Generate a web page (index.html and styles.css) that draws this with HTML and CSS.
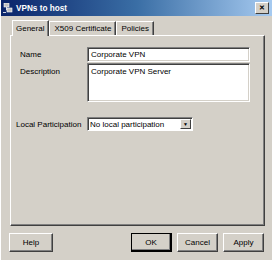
FILE: index.html
```html
<!DOCTYPE html>
<html lang="en">

<head>
    <meta charset="UTF-8">
    <meta name="viewport" content="width=device-width, initial-scale=1.0">
    <title>VPNs to host</title>
    <link rel="stylesheet" href="styles.css">
</head>

<body>
    <div class="window">
        <div class="titlebar">
            <svg class="app-icon" width="10" height="10" viewBox="0 0 10 10">
                <rect x="1" y="0" width="5" height="4" fill="#c0c0c0" stroke="#ffffff" stroke-width="0.6"/>
                <rect x="4" y="5" width="5" height="4" fill="#c0c0c0" stroke="#ffffff" stroke-width="0.6"/>
                <path d="M3.5 4 V7 H4" stroke="#ffffff" stroke-width="0.8" fill="none"/>
                <path d="M0 9.5 H3" stroke="#ffffff" stroke-width="0.8"/>
            </svg>
            <span class="title">VPNs to host</span>
            <span class="close">✕</span>
        </div>

        <div class="content">
            <div class="tabs">
                <div class="tab active">General</div>
                <div class="tab">X509 Certificate</div>
                <div class="tab">Policies</div>
            </div>

            <div class="panel">
                <div class="form">
                    <div class="label">Name</div>
                    <div class="field">Corporate VPN</div>

                    <div class="label top">Description</div>
                    <div class="field area">Corporate VPN Server</div>

                    <div class="label lp">Local Participation</div>
                    <div class="select lp">
                        <span class="select-text">No local participation</span>
                        <span class="drop">▼</span>
                    </div>
                </div>
            </div>

            <div class="buttons">
                <button class="btn help">Help</button>
                <div class="spacer"></div>
                <button class="btn default">OK</button>
                <button class="btn">Cancel</button>
                <button class="btn">Apply</button>
            </div>
        </div>
    </div>
</body>

</html>
```

FILE: styles.css
```css
body {
    margin: 0;
    font-family: "Liberation Sans", Arial, sans-serif;
    font-size: 8px;
    color: #000;
    background-color: #d4d0c8;
}

.window {
    width: 272px;
    height: 260px;
    background: #d4d0c8;
    border-left: 1px solid #ffffff;
    box-sizing: border-box;
}

.titlebar {
    height: 16px;
    display: flex;
    align-items: center;
    padding: 0 3px 0 2px;
    background: linear-gradient(to right, #0a246a, #3a6ea5 50%, #a6caf0);
}

.app-icon {
    margin-right: 3px;
}

.title {
    color: #ffffff;
    font-weight: bold;
    font-size: 8.2px;
    flex: 1;
}

.close {
    width: 12px;
    height: 10px;
    background: #d4d0c8;
    border-top: 1px solid #ffffff;
    border-left: 1px solid #ffffff;
    border-right: 1px solid #404040;
    border-bottom: 1px solid #404040;
    font-size: 7px;
    font-weight: bold;
    line-height: 10px;
    text-align: center;
}

.content {
    padding: 3px 7px 0 7px;
}

.tabs {
    display: flex;
    padding-left: 4px;
    height: 16px;
    align-items: flex-end;
}

.tab {
    height: 13px;
    line-height: 13px;
    padding: 0 4px;
    border-top: 1px solid #ffffff;
    border-left: 1px solid #ffffff;
    border-right: 1px solid #404040;
    box-shadow: inset -1px 0 #808080;
}

.tab.active {
    height: 15px;
    line-height: 15px;
    padding: 0 4px 0 3px;
    margin-bottom: -1px;
    background: #d4d0c8;
    position: relative;
}

.panel {
    margin-left: 2px;
    height: 191px;
    box-sizing: border-box;
    border-top: 1px solid #ffffff;
    border-left: 1px solid #ffffff;
    border-right: 1px solid #404040;
    border-bottom: 1px solid #404040;
    box-shadow: inset -1px -1px #808080;
    padding-top: 11px;
}

.form {
    display: grid;
    grid-template-columns: 76px 163px;
    row-gap: 1px;
    align-items: center;
}

.label {
    padding-left: 9px;
}

.label.top {
    align-self: start;
    padding-top: 4px;
}

.label.lp {
    padding-left: 5px;
    margin-top: 14px;
}

.field {
    height: 15px;
    box-sizing: border-box;
    background: #ffffff;
    border-top: 1px solid #808080;
    border-left: 1px solid #808080;
    border-right: 1px solid #ffffff;
    border-bottom: 1px solid #ffffff;
    box-shadow: inset 1px 1px #404040, inset -1px -1px #d4d0c8;
    padding: 2px 3px;
    line-height: 10px;
}

.field.area {
    height: 39px;
    padding-top: 3px;
}

.select {
    width: 106px;
    height: 14px;
    margin-top: 14px;
    box-sizing: border-box;
    background: #ffffff;
    border-top: 1px solid #808080;
    border-left: 1px solid #808080;
    border-right: 1px solid #ffffff;
    border-bottom: 1px solid #ffffff;
    box-shadow: inset 1px 1px #404040;
    display: flex;
    align-items: center;
    padding: 1px 1px 1px 2px;
}

.select-text {
    flex: 1;
}

.drop {
    width: 11px;
    height: 10px;
    box-sizing: border-box;
    background: #d4d0c8;
    border-top: 1px solid #ffffff;
    border-left: 1px solid #ffffff;
    border-right: 1px solid #404040;
    border-bottom: 1px solid #404040;
    font-size: 5px;
    line-height: 8px;
    text-align: center;
}

.buttons {
    display: flex;
    gap: 5px;
    margin-top: 7px;
    padding-left: 1px;
    padding-right: 1px;
}

.spacer {
    flex: 1;
}

.btn {
    width: 41px;
    height: 19px;
    padding: 0;
    font-family: "Liberation Sans", Arial, sans-serif;
    font-size: 8px;
    color: #000;
    background: #d4d0c8;
    border-top: 1px solid #ffffff;
    border-left: 1px solid #ffffff;
    border-right: 1px solid #404040;
    border-bottom: 1px solid #404040;
    box-shadow: inset -1px -1px #808080;
}

.btn.help {
    width: 44px;
}

.btn.default {
    outline: 1px solid #000000;
    outline-offset: -1px;
    border-right: 2px solid #000000;
    border-bottom: 2px solid #000000;
}
```
